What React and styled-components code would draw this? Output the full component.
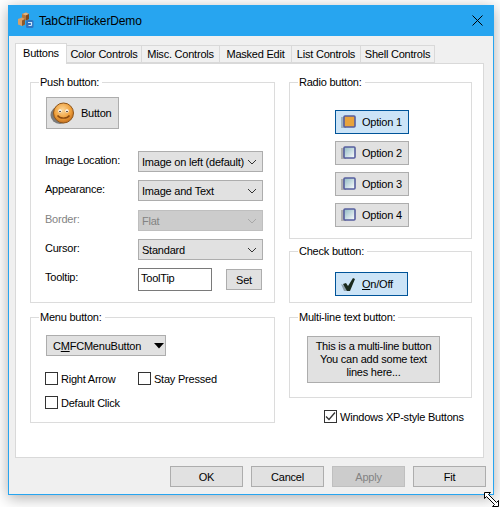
import React from 'react';
import styled, { createGlobalStyle } from 'styled-components';

const GlobalStyle = createGlobalStyle`
  html, body {
    margin: 0;
    padding: 0;
    background: #fff;
  }
  body {
    width: 500px;
    height: 507px;
    overflow: hidden;
    font-family: "Liberation Sans", Arial, sans-serif;
    font-size: 11px;
    letter-spacing: -0.22px;
    color: #000;
  }
  svg {
    flex: none;
  }
`;

const Page = styled.div`
  position: relative;
  width: 500px;
  height: 507px;
  overflow: hidden;
  padding: 5px 6px 0 8px;
  box-sizing: border-box;
`;

const Window = styled.div`
  width: 486px;
  height: 490px;
  box-sizing: border-box;
  border: 1px solid #27a5f0;
  border-top: 0;
  background: #f0f0f0;
  box-shadow: 0 3px 14px rgba(0, 0, 0, 0.32);
  display: flex;
  flex-direction: column;
`;

const TitleBar = styled.div`
  height: 31px;
  flex: none;
  background: #27a5f0;
  display: flex;
  align-items: center;
  padding: 0 10px 0 8px;
  font-size: 12px;
  letter-spacing: -0.15px;
`;

const TitleText = styled.span`
  margin-left: 5px;
  flex: 1;
`;

const Body = styled.div`
  flex: 1;
  padding: 7px 0 0 6px;
  display: flex;
  flex-direction: column;
`;

const TabRow = styled.div`
  display: flex;
  align-items: flex-end;
  height: 20px;
  position: relative;
  z-index: 1;
`;

const Tab = styled.div`
  width: ${p => p.$w}px;
  height: ${p => (p.$active ? 21 : 18)}px;
  margin-bottom: ${p => (p.$active ? -1 : 0)}px;
  box-sizing: border-box;
  background: ${p => (p.$active ? '#fff' : '#f0f0f0')};
  border: 1px solid #d9d9d9;
  border-bottom: ${p => (p.$active ? '0' : '1px solid #d9d9d9')};
  border-left: ${p => (p.$first || p.$active ? '1px solid #d9d9d9' : '0')};
  display: flex;
  align-items: center;
  justify-content: center;
  padding-bottom: ${p => (p.$active ? 3 : 0)}px;
  white-space: nowrap;
`;

const Panel = styled.div`
  width: 469px;
  height: 395px;
  box-sizing: border-box;
  background: #fff;
  border: 1px solid #d9d9d9;
  padding: 10px 0 0 14px;
  display: grid;
  grid-template-columns: 245px 183px;
  column-gap: 14px;
  align-content: start;
`;

const Column = styled.div`
  display: flex;
  flex-direction: column;
`;

const Group = styled.fieldset`
  margin: 0 0 ${p => p.$gap || 0}px;
  padding: 0;
  min-width: 0;
  height: ${p => p.$h}px;
  box-sizing: border-box;
  border: 1px solid #dcdcdc;
`;

const Legend = styled.legend`
  margin-left: 8px;
  padding: 0 3px 0 1px;
  height: 16px;
  line-height: 16px;
`;

const PushContent = styled.div`
  padding: 7px 0 0 14px;
`;

const Button = styled.div`
  box-sizing: border-box;
  width: ${p => p.$w}px;
  height: ${p => p.$h}px;
  background: ${p => (p.$disabled ? '#cccccc' : p.$on ? '#cce4f7' : '#e1e1e1')};
  border: ${p => (p.$on ? '1px solid #005499' : p.$disabled ? '1px solid #bfbfbf' : '1px solid #adadad')};
  color: ${p => (p.$disabled ? '#838383' : '#000')};
  display: flex;
  align-items: center;
  justify-content: center;
  flex: none;
`;

const ImageButton = styled(Button)`
  margin-left: 1px;
  justify-content: flex-start;
  padding-left: 3px;
  gap: 6px;
`;

const FormGrid = styled.div`
  margin-top: 22px;
  display: grid;
  grid-template-columns: 93px 125px;
  grid-template-rows: 29px 30px 29px 29px auto;
`;

const FieldLabel = styled.div`
  height: 20px;
  line-height: 18px;
  color: ${p => (p.$disabled ? '#838383' : '#000')};
`;

const Select = styled.div`
  box-sizing: border-box;
  width: 125px;
  height: 21px;
  background: ${p => (p.$disabled ? '#cccccc' : '#e1e1e1')};
  border: 1px solid ${p => (p.$disabled ? '#bfbfbf' : '#adadad')};
  color: ${p => (p.$disabled ? '#838383' : '#000')};
  display: flex;
  align-items: center;
  justify-content: space-between;
  padding: 0 5px 0 3px;
  white-space: nowrap;
`;

const TooltipRow = styled.div`
  display: flex;
  gap: 14px;
`;

const TextInput = styled.div`
  box-sizing: border-box;
  width: 74px;
  height: 23px;
  background: #fff;
  border: 1px solid #7a7a7a;
  padding-left: 2px;
  line-height: 19px;
`;

const SetButton = styled(Button)`
  margin-top: 1px;
`;

const MenuContent = styled.div`
  padding: 10px 0 0 14px;
`;

const MenuButton = styled(Button)`
  margin: 0 0 16px 1px;
  justify-content: flex-start;
  padding-left: 6px;
  gap: 13px;
`;

const CheckRows = styled.div`
  display: grid;
  grid-template-columns: 93px auto;
  row-gap: 11px;
  justify-content: start;
`;

const CheckItem = styled.div`
  display: flex;
  align-items: center;
  gap: 3px;
  height: 13px;
  white-space: nowrap;
`;

const Box = styled.div`
  box-sizing: border-box;
  width: 13px;
  height: 13px;
  border: 1px solid #333;
  background: #fff;
  flex: none;
  display: flex;
  align-items: center;
  justify-content: center;
`;

const RadioStack = styled.div`
  display: flex;
  flex-direction: column;
  align-items: flex-start;
  gap: 7px;
  padding: 20px 0 0 45px;
`;

const IconButton = styled(Button)`
  justify-content: flex-start;
  padding-left: 5px;
  gap: 6px;
  white-space: nowrap;
`;

const CenterContent = styled.div`
  display: flex;
  padding: ${p => p.$top}px 0 0 ${p => p.$left}px;
`;

const MultiButton = styled(Button)`
  text-align: center;
  line-height: 13px;
  padding-bottom: 1px;
  white-space: nowrap;
`;

const XpRow = styled(CheckItem)`
  margin: 12px 0 0 35px;
`;

const Footer = styled.div`
  display: flex;
  gap: 8px;
  margin: 8px 0 0 155px;
`;

const CursorOverlay = styled.svg`
  position: absolute;
  left: 483px;
  top: 491px;
`;

const Underline = styled.span`
  text-decoration: underline;
`;

const AppIcon = () => (
  <svg width="17" height="17" viewBox="0 0 17 17">
    <path d="M5 2l4-1.500 3 1.500v5l-3 1.500-4-1.500z" fill="#b8783c" />
    <path d="M5 2l4 1.500 3-1.500-3-1.500z" fill="#e0b483" />
    <path d="M9 3.500v5l3-1.500v-5z" fill="#7c4a22" />
    <path d="M1 7l4-1.500 3 1.500v5.500l-3 1.500-4-1.500z" fill="#d9a066" />
    <path d="M5 8.500v5.500l3-1.500v-5.500z" fill="#8c5a2c" />
    <rect x="9" y="8" width="7.500" height="8" rx="1.500" fill="#2f74c0" />
    <path d="M11 10.500h3.500v3M14.500 13.500h-3" fill="none" stroke="#cfe6fb" strokeWidth="1.200" />
  </svg>
);

const Smiley = () => (
  <svg width="25" height="24" viewBox="0 0 25 24">
    <defs>
      <radialGradient id="face" cx="0.45" cy="0.35" r="0.7">
        <stop offset="0" stopColor="#fbd79a" />
        <stop offset="0.6" stopColor="#ef9f3a" />
        <stop offset="1" stopColor="#b9651a" />
      </radialGradient>
    </defs>
    <ellipse cx="10" cy="14" rx="9.500" ry="9" fill="#000" opacity="0.45" />
    <circle cx="13.500" cy="12" r="10" fill="url(#face)" stroke="#8f5518" strokeWidth="1" />
    <circle cx="10" cy="10" r="1.700" fill="#fff" />
    <circle cx="17" cy="10" r="1.700" fill="#fff" />
    <circle cx="10" cy="10.500" r="0.800" fill="#2a1a08" />
    <circle cx="17" cy="10.500" r="0.800" fill="#2a1a08" />
    <path d="M7.500 14.500c2.500 3.500 9.500 3.500 12 0" fill="none" stroke="#8a4a10" strokeWidth="1.400" />
  </svg>
);

const RadioIcon = ({ on }) => (
  <svg width="15" height="14" viewBox="0 0 15 14">
    <defs>
      <linearGradient id="well" x1="0" y1="0" x2="1" y2="1">
        <stop offset="0" stopColor="#8fb8c2" />
        <stop offset="1" stopColor="#ffffff" />
      </linearGradient>
    </defs>
    <rect x="0" y="2" width="5" height="11" fill="#000" opacity="0.22" />
    <rect x="3" y="1" width="11" height="11" rx="1" fill={on ? '#e8a33c' : 'url(#well)'} stroke="#565e9e" strokeWidth="1.600" />
  </svg>
);

const CheckIcon = () => (
  <svg width="15" height="15" viewBox="0 0 15 15">
    <path d="M0 7l4 2 3 5H3z" fill="#000" opacity="0.3" />
    <path d="M2 7l3-1 2 3 5-8 2 1-5 12H6z" fill="#1b2a1e" />
  </svg>
);

const Chevron = ({ color = '#333' }) => (
  <svg width="10" height="6" viewBox="0 0 10 6">
    <path d="M1 1l4 4 4-4" fill="none" stroke={color} strokeWidth="1" />
  </svg>
);

const Arrow = () => (
  <svg width="10" height="6" viewBox="0 0 10 6">
    <path d="M0 0h10L5 5.500z" fill="#000" />
  </svg>
);

const Tick = () => (
  <svg width="11" height="11" viewBox="0 0 11 11">
    <path d="M1 5.500l3 3 6-7" fill="none" stroke="#333" strokeWidth="1.300" />
  </svg>
);

const tabs = [
  ['Buttons', 52],
  ['Color Controls', 75],
  ['Misc. Controls', 78],
  ['Masked Edit', 72],
  ['List Controls', 69],
  ['Shell Controls', 74],
];

const formRows = [
  ['Image Location:', 'Image on left (default)'],
  ['Appearance:', 'Image and Text'],
  ['Border:', 'Flat', true],
  ['Cursor:', 'Standard'],
];

const options = ['Option 1', 'Option 2', 'Option 3', 'Option 4'];

const App = () => {
  return (
    <Page>
      <GlobalStyle />
      <Window>
        <TitleBar>
          <AppIcon />
          <TitleText>TabCtrlFlickerDemo</TitleText>
          <svg width="11" height="11" viewBox="0 0 11 11">
            <path d="M0.500 0.500l10 10M10.500 0.500l-10 10" stroke="#000" strokeWidth="1" />
          </svg>
        </TitleBar>
        <Body>
          <TabRow>
            {tabs.map(([name, w], i) => (
              <Tab key={name} $w={w} $active={i === 0} $first={i === 0}>{name}</Tab>
            ))}
          </TabRow>
          <Panel>
            <Column>
              <Group $h={229} $gap={6}>
                <Legend>Push button:</Legend>
                <PushContent>
                  <ImageButton $w={73} $h={32}>
                    <Smiley />
                    <span>Button</span>
                  </ImageButton>
                  <FormGrid>
                    {formRows.map(([label, value, disabled]) => (
                      <React.Fragment key={label}>
                        <FieldLabel $disabled={disabled}>{label}</FieldLabel>
                        <Select $disabled={disabled}>
                          {value}
                          <Chevron color={disabled ? '#a8a8a8' : '#333'} />
                        </Select>
                      </React.Fragment>
                    ))}
                    <FieldLabel>Tooltip:</FieldLabel>
                    <TooltipRow>
                      <TextInput>ToolTip</TextInput>
                      <SetButton $w={36} $h={21}>Set</SetButton>
                    </TooltipRow>
                  </FormGrid>
                </PushContent>
              </Group>
              <Group $h={114}>
                <Legend>Menu button:</Legend>
                <MenuContent>
                  <MenuButton $w={120} $h={21}>
                    <span>C<Underline>M</Underline>FCMenuButton</span>
                    <Arrow />
                  </MenuButton>
                  <CheckRows>
                    <CheckItem><Box />Right Arrow</CheckItem>
                    <CheckItem><Box />Stay Pressed</CheckItem>
                    <CheckItem><Box />Default Click</CheckItem>
                  </CheckRows>
                </MenuContent>
              </Group>
            </Column>
            <Column>
              <Group $h={165} $gap={4}>
                <Legend>Radio button:</Legend>
                <RadioStack>
                  {options.map((o, i) => (
                    <IconButton key={o} $w={74} $h={24} $on={i === 0}>
                      <RadioIcon on={i === 0} />
                      {o}
                    </IconButton>
                  ))}
                </RadioStack>
              </Group>
              <Group $h={60} $gap={6}>
                <Legend>Check button:</Legend>
                <CenterContent $top={13} $left={45}>
                  <IconButton $w={73} $h={24} $on>
                    <CheckIcon />
                    <span><Underline>O</Underline>n/Off</span>
                  </IconButton>
                </CenterContent>
              </Group>
              <Group $h={89}>
                <Legend>Multi-line text button:</Legend>
                <CenterContent $top={11} $left={17}>
                  <MultiButton $w={133} $h={47}>
                    <div>
                      This is a multi-line button<br />
                      You can add some text<br />
                      lines here...
                    </div>
                  </MultiButton>
                </CenterContent>
              </Group>
              <XpRow>
                <Box><Tick /></Box>
                Windows XP-style Buttons
              </XpRow>
            </Column>
          </Panel>
          <Footer>
            <Button $w={73} $h={21}>OK</Button>
            <Button $w={73} $h={21}>Cancel</Button>
            <Button $w={73} $h={21} $disabled>Apply</Button>
            <Button $w={73} $h={21}>Fit</Button>
          </Footer>
        </Body>
      </Window>
      <CursorOverlay width="18" height="17" viewBox="0 0 18 17">
        <path d="M1.500 1.500h6l-2 2 8 8 2-2v6h-6l2-2-8-8-2 2z" fill="#fff" stroke="#000" strokeWidth="1" />
      </CursorOverlay>
    </Page>
  );
};

export default App;
